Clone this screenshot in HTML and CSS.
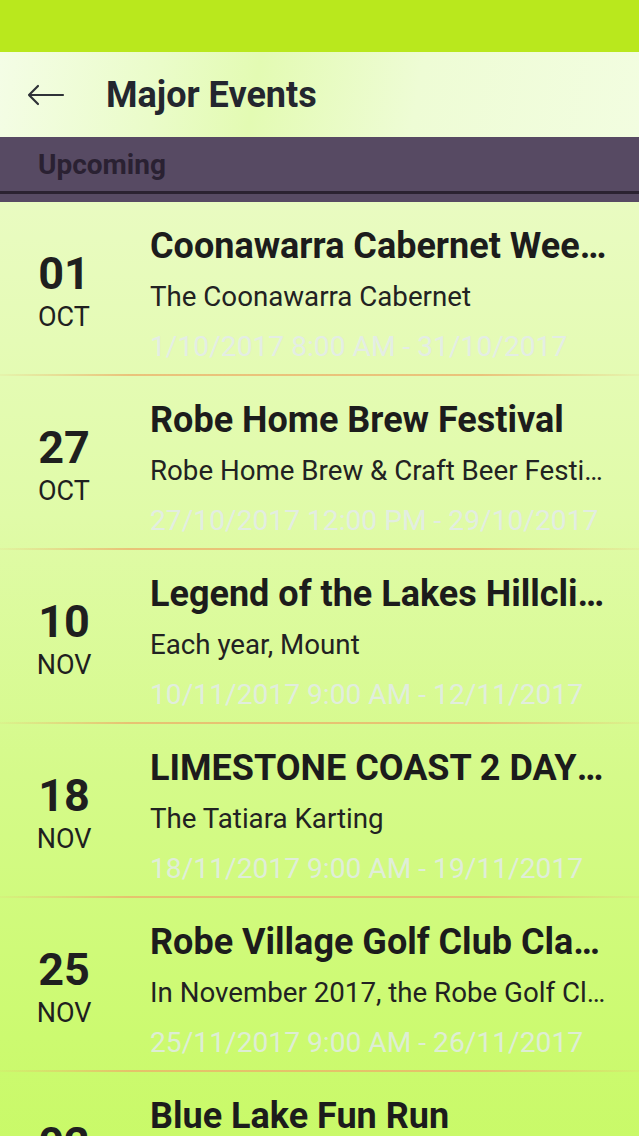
FILE: index.html
```html
<!DOCTYPE html>
<html lang="en">
<head>
<meta charset="utf-8">
<title>Major Events</title>
<link rel="stylesheet" href="styles.css">
</head>
<body>
<div class="screen">
  <div class="statusbar"></div>
  <header class="toolbar">
    <svg class="back" width="40" height="24" viewBox="0 0 40 24">
      <path d="M38 12H4M13 3L4 12L13 21" fill="none" stroke="#2f3238" stroke-width="2.2" stroke-linecap="round" stroke-linejoin="round"/>
    </svg>
    <h1 class="title">Major Events</h1>
  </header>
  <div class="section">
    <div class="section-label">Upcoming</div>
    <div class="section-rule"></div>
  </div>
  <main class="list">
    <div class="event">
      <div class="date"><div class="day">01</div><div class="month">OCT</div></div>
      <div class="info">
        <div class="name">Coonawarra Cabernet Weekend</div>
        <div class="desc">The Coonawarra Cabernet</div>
        <div class="when">1/10/2017 8:00 AM - 31/10/2017</div>
      </div>
    </div>
    <div class="event">
      <div class="date"><div class="day">27</div><div class="month">OCT</div></div>
      <div class="info">
        <div class="name">Robe Home Brew Festival</div>
        <div class="desc">Robe Home Brew &amp; Craft Beer Festival</div>
        <div class="when">27/10/2017 12:00 PM - 29/10/2017</div>
      </div>
    </div>
    <div class="event">
      <div class="date"><div class="day">10</div><div class="month">NOV</div></div>
      <div class="info">
        <div class="name">Legend of the Lakes Hillclimb</div>
        <div class="desc">Each year, Mount</div>
        <div class="when">10/11/2017 9:00 AM - 12/11/2017</div>
      </div>
    </div>
    <div class="event">
      <div class="date"><div class="day">18</div><div class="month">NOV</div></div>
      <div class="info">
        <div class="name">LIMESTONE COAST 2 DAY CHAMPIONSHIP</div>
        <div class="desc">The Tatiara Karting</div>
        <div class="when">18/11/2017 9:00 AM - 19/11/2017</div>
      </div>
    </div>
    <div class="event">
      <div class="date"><div class="day">25</div><div class="month">NOV</div></div>
      <div class="info">
        <div class="name">Robe Village Golf Club Classic</div>
        <div class="desc">In November 2017, the Robe Golf Club</div>
        <div class="when">25/11/2017 9:00 AM - 26/11/2017</div>
      </div>
    </div>
    <div class="event">
      <div class="date"><div class="day">02</div><div class="month">DEC</div></div>
      <div class="info">
        <div class="name">Blue Lake Fun Run</div>
        <div class="desc">The Blue Lake Fun Run</div>
        <div class="when">2/12/2017 8:00 AM - 2/12/2017</div>
      </div>
    </div>
  </main>
</div>
</body>
</html>
```
FILE: styles.css
```css
* { box-sizing: border-box; margin: 0; padding: 0; }
html, body { width: 639px; height: 1136px; overflow: hidden; }
body { font-family: Roboto, "Liberation Sans", sans-serif; background: #c8fa66; }
.screen { width: 639px; height: 1136px; display: flex; flex-direction: column; overflow: hidden; }
.statusbar { height: 52px; background: #b9e81d; flex: none; }
.toolbar {
  height: 85px; flex: none; display: flex; align-items: center;
  background: linear-gradient(100deg, #f4fde6 0%, #eafcc9 25%, #e3fbb3 40%, #eefcd5 65%, #f2fde0 100%);
}
.back { margin-left: 25px; flex: none; }
.title { margin-left: 41px; font-size: 36px; font-weight: 700; color: #23262f; }
.section { height: 65px; flex: none; background: #574a63; display: flex; flex-direction: column; }
.section-label { height: 54px; padding-left: 38px; display: flex; align-items: center; font-size: 28px; font-weight: 700; color: #2a2132; }
.section-rule { height: 3px; background: #2b2231; }
.list {
  flex: 1; display: flex; flex-direction: column;
  background: linear-gradient(180deg, #e9fbc1 0%, #e0fba8 30%, #d5fa8a 55%, #ccfa70 80%, #c6f961 100%);
}
.event { height: 174px; flex: none; display: flex; position: relative; }
.event::after {
  content: ""; position: absolute; left: 0; right: 0; bottom: 0; height: 2px;
  background: linear-gradient(90deg, rgba(236,180,110,0.1) 0%, rgba(236,176,104,0.75) 20%, rgba(236,176,104,0.75) 75%, rgba(236,180,110,0.1) 100%);
}
.date { width: 128px; flex: none; padding-top: 50px; display: flex; flex-direction: column; align-items: center; color: #1f1f1f; }
.day { font-size: 45px; font-weight: 700; line-height: 44px; }
.month { font-size: 27px; font-weight: 400; line-height: 34px; margin-top: 4px; }
.info { flex: 1; min-width: 0; padding: 24px 30px 0 22px; }
.name { font-size: 36px; font-weight: 700; line-height: 40px; color: #1c1c1c; white-space: nowrap; overflow: hidden; text-overflow: ellipsis; }
.desc { margin-top: 15px; font-size: 27.7px; line-height: 32px; color: #222; white-space: nowrap; overflow: hidden; text-overflow: ellipsis; }
.when { margin-top: 18px; font-size: 28.2px; line-height: 32px; color: rgba(228,234,242,0.8); white-space: nowrap; overflow: hidden; text-overflow: ellipsis; }
```
